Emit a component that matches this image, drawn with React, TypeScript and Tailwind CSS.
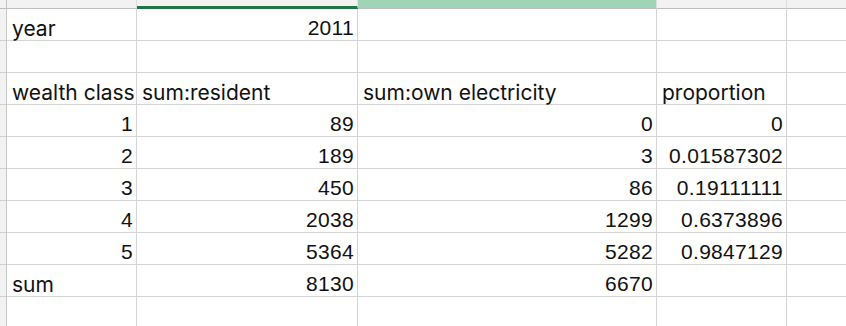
import React from 'react';

type Cell = { v?: string; align?: 'l' | 'r' };

const rows: Cell[][] = [
  [{ v: 'year' }, { v: '2011', align: 'r' }, {}, {}, {}],
  [{}, {}, {}, {}, {}],
  [{ v: 'wealth class' }, { v: 'sum:resident' }, { v: 'sum:own electricity' }, { v: 'proportion' }, {}],
  [{ v: '1', align: 'r' }, { v: '89', align: 'r' }, { v: '0', align: 'r' }, { v: '0', align: 'r' }, {}],
  [{ v: '2', align: 'r' }, { v: '189', align: 'r' }, { v: '3', align: 'r' }, { v: '0.01587302', align: 'r' }, {}],
  [{ v: '3', align: 'r' }, { v: '450', align: 'r' }, { v: '86', align: 'r' }, { v: '0.19111111', align: 'r' }, {}],
  [{ v: '4', align: 'r' }, { v: '2038', align: 'r' }, { v: '1299', align: 'r' }, { v: '0.6373896', align: 'r' }, {}],
  [{ v: '5', align: 'r' }, { v: '5364', align: 'r' }, { v: '5282', align: 'r' }, { v: '0.9847129', align: 'r' }, {}],
  [{ v: 'sum' }, { v: '8130', align: 'r' }, { v: '6670', align: 'r' }, {}, {}],
  [{}, {}, {}, {}, {}],
];

export default function App() {
  return (
    <div className="h-[326px] w-[846px] overflow-hidden bg-white text-[#111]">
      <div className="grid grid-cols-[7px_130px_221px_299px_130px_1fr] grid-rows-[9px_repeat(10,32px)]">
        {/* column header strip */}
        <div className="border-r border-b border-r-[#c4c4c4] border-b-[#bdbdbd] bg-[#f2f2f2]" />
        <div className="border-r border-b border-r-[#dedede] border-b-[#bdbdbd] bg-[#f2f2f2]" />
        <div className="border-b-[3px] border-r border-r-[#dedede] border-b-[#217346] bg-[#f2f2f2]" />
        <div className="border-r border-b border-r-[#dedede] border-b-[#bdbdbd] bg-[#9fd5b7]" />
        <div className="border-r border-b border-r-[#dedede] border-b-[#bdbdbd] bg-[#f2f2f2]" />
        <div className="border-b border-b-[#bdbdbd] bg-[#f2f2f2]" />

        {rows.map((row, r) => (
          <React.Fragment key={r}>
            <div className="border-r border-b border-r-[#c4c4c4] border-b-[#d0d0d0] bg-[#f2f2f2]" />
            {row.map((c, i) => (
              <div
                key={i}
                className={`flex items-end whitespace-nowrap border-b border-b-[#d4d4d4] leading-none ${
                  i < 4 ? 'border-r border-r-[#d4d4d4]' : ''
                } ${
                  c.align === 'r'
                    ? "justify-end pr-[3px] pb-[2px] text-[21px] tracking-[0.3px] [font-family:'Liberation_Sans',Arial,sans-serif]"
                    : "justify-start pl-[5px] pb-[1px] text-[21px] [font-family:Inter,'Liberation_Sans',sans-serif]"
                }`}
              >
                {c.v}
              </div>
            ))}
          </React.Fragment>
        ))}
      </div>
    </div>
  );
}
